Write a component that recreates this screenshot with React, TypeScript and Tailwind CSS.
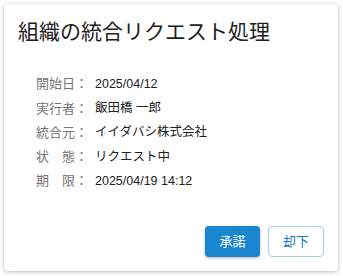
import React from "react";

const rows: [string, string][] = [
  ["開始日：", "2025/04/12"],
  ["実行者：", "飯田橋 一郎"],
  ["統合元：", "イイダバシ株式会社"],
  ["状　態：", "リクエスト中"],
  ["期　限：", "2025/04/19 14:12"],
];

export default function App() {
  return (
    <div
      className="w-[343px] h-[276px] bg-white p-[4px]"
      style={{ fontFamily: '"Liberation Sans", "Noto Sans CJK JP", sans-serif' }}
    >
      <div className="w-[334px] h-[267px] bg-white rounded-[4px] shadow-[0_1px_4px_rgba(0,0,0,0.25),0_0_2px_rgba(0,0,0,0.08)] flex flex-col">
        <div className="pl-[14px] pt-[12px] h-[44px] text-[21px] leading-[32px] text-[#212121]">
          組織の統合リクエスト処理
        </div>
        <div className="mt-[24px] pl-[32px] flex flex-col">
          {rows.map(([k, v]) => (
            <div key={k} className="flex h-[24.25px] items-center">
              <span className="w-[59px] text-[13px] text-[#757575]">{k}</span>
              <span className="text-[12.5px] text-[#212121]">{v}</span>
            </div>
          ))}
        </div>
        <div className="mt-auto flex justify-end gap-[8px] pr-[14px] pb-[14px]">
          <button className="w-[55px] h-[31px] rounded-[4px] bg-[#1a86d0] text-white text-[13px] shadow-[0_1px_3px_rgba(0,0,0,0.3)]">
            承諾
          </button>
          <button className="w-[56px] h-[31px] rounded-[4px] border border-[#a9cdf0] text-[#1a78c8] text-[13px] bg-white">
            却下
          </button>
        </div>
      </div>
    </div>
  );
}
